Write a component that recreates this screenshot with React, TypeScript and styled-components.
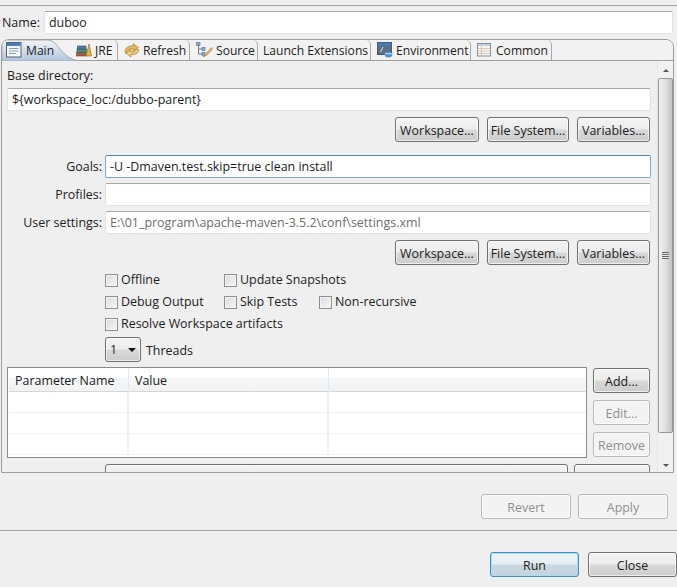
import React from 'react';
import styled, { createGlobalStyle } from 'styled-components';

const GlobalStyle = createGlobalStyle`
  html, body {
    margin: 0;
    padding: 0;
    background: #efefef;
    overflow: hidden;
  }
  * { box-sizing: border-box; }
`;

const Page = styled.div`
  width: 677px;
  height: 587px;
  overflow: hidden;
  padding-top: 5px;
  background: #efefef;
  color: #1c1c1c;
  font-family: 'Open Sans', 'Noto Sans', sans-serif;
  font-size: 12.45px;
`;
const TopRule = styled.div`
  height: 1px;
  background: #a0a0a0;
`;
const NameRow = styled.div`
  display: flex;
  align-items: center;
  height: 23px;
  margin: 5px 4px 0 2px;
`;
const NameLabel = styled.div`
  flex: none;
  width: 42px;
`;
const Field = styled.div<{ $active?: boolean; $muted?: boolean }>`
  flex: 1;
  height: 23px;
  padding: 0 4px;
  line-height: 22px;
  white-space: nowrap;
  background: #fff;
  border: 1px solid ${p => (p.$active ? '#7ba6cf' : '#e2e2e2')};
  border-top-color: ${p => (p.$active ? '#4f86b8' : '#a8a8a8')};
  border-radius: 2px;
  color: ${p => (p.$muted ? '#6d6d6d' : '#1c1c1c')};
`;
const Folder = styled.div`
  height: 434px;
  margin: 5px 3px 0 1px;
  border: 1px solid #9c9c9c;
  border-radius: 8px 8px 0 0;
  overflow: hidden;
  background: #efefef;
`;
const TabStrip = styled.div`
  display: flex;
  height: 21px;
  border-bottom: 1px solid #9c9c9c;
  background: #f2f2f2;
  font-size: 12.1px;
`;
const Tab = styled.div<{ $width: number; $pad?: number }>`
  position: relative;
  display: flex;
  align-items: center;
  flex: none;
  width: ${p => p.$width}px;
  height: 20px;
  padding-left: ${p => p.$pad ?? 6}px;
  gap: 3px;
  white-space: nowrap;
  border-right: 1px solid #a9a9a9;
  border-top-right-radius: 5px;
`;
const MainTab = styled(Tab)`
  border-right: none;
  z-index: 1;
  gap: 4px;
`;
const MainShape = styled.svg`
  position: absolute;
  left: 0;
  top: 0;
  z-index: -1;
`;
const FolderBody = styled.div`
  display: flex;
  height: 412px;
`;
const FormArea = styled.div`
  flex: 1;
  min-width: 0;
  height: 412px;
  overflow: hidden;
  padding: 5px 5px 0 5px;
`;
const Label = styled.div`
  height: 17px;
  line-height: 19px;
`;
const WideField = styled(Field)`
  flex: none;
  width: 644px;
  margin-top: 5px;
`;
const ButtonRow = styled.div<{ $top: number }>`
  display: flex;
  justify-content: flex-end;
  gap: 8px;
  width: 643px;
  margin-top: ${p => p.$top}px;
`;
const PushButton = styled.div<{ $width: number; $disabled?: boolean; $focus?: boolean }>`
  display: flex;
  align-items: center;
  justify-content: center;
  flex: none;
  width: ${p => p.$width}px;
  height: 25px;
  padding-top: 1px;
  border: 1px solid ${p => (p.$disabled ? '#b9b9b9' : p.$focus ? '#3d8fc4' : '#707070')};
  border-radius: 3px;
  color: ${p => (p.$disabled ? '#8f8f8f' : '#1c1c1c')};
  background: ${p =>
    p.$disabled
      ? '#f3f3f3'
      : p.$focus
        ? 'linear-gradient(#edf3f7 0%, #e6eef3 48%, #c9d7e0 52%, #c4d3dc 100%)'
        : 'linear-gradient(#f4f4f4 0%, #ececec 48%, #d8d8d8 52%, #cdcdcd 100%)'};
  box-shadow: inset 0 0 0 1px ${p => (p.$focus ? '#a9dcf3' : 'rgba(255,255,255,.65)')};
`;
const FormRow = styled.div<{ $top: number }>`
  display: flex;
  align-items: center;
  gap: 3px;
  width: 644px;
  height: 23px;
  margin-top: ${p => p.$top}px;
`;
const RowLabel = styled.div`
  flex: none;
  width: 95px;
  text-align: right;
  white-space: nowrap;
`;
const CheckGrid = styled.div`
  display: grid;
  grid-template-columns: 119px 95px auto;
  grid-auto-rows: 22px;
  margin: 3px 0 0 98px;
`;
const CheckItem = styled.div`
  display: flex;
  align-items: center;
  gap: 3px;
  white-space: nowrap;
`;
const WideCheck = styled(CheckItem)`
  grid-column: 1 / -1;
`;
const Box = styled.span`
  flex: none;
  width: 13px;
  height: 13px;
  margin-top: 2px;
  border: 1px solid #8e8f8f;
  background: linear-gradient(135deg, #dcdcdc, #f5f5f5);
  box-shadow: inset 0 0 0 1px #f4f4f4;
`;
const ThreadsRow = styled.div`
  display: flex;
  align-items: center;
  gap: 5px;
  height: 25px;
  margin: 3px 0 0 98px;
`;
const ThreadsLabel = styled.span`
  margin-top: 2px;
`;
const Combo = styled(PushButton)`
  justify-content: space-between;
  padding: 0 4px;
`;
const ComboArrow = styled.span`
  width: 0;
  height: 0;
  border-left: 4px solid transparent;
  border-right: 4px solid transparent;
  border-top: 4px solid #111;
`;
const TableRow = styled.div`
  display: flex;
  gap: 6px;
  margin-top: 5px;
  height: 91px;
`;
const Table = styled.div`
  flex: none;
  width: 580px;
  height: 91px;
  background: #fff;
  border: 1px solid #8a8a8a;
  padding-left: 1px;
`;
const HeaderRow = styled.div`
  display: grid;
  grid-template-columns: 120px 200px 1fr;
  height: 24px;
  background: linear-gradient(#fff 0%, #fff 40%, #f5f6f7 45%, #f1f2f3 100%);
  border-bottom: 1px solid #d6d6d6;
`;
const HeaderCell = styled.div`
  padding-left: 6px;
  line-height: 25px;
  border-right: 1px solid #e3e8ee;
`;
const BodyRow = styled.div`
  display: grid;
  grid-template-columns: 120px 200px 1fr;
  height: 21px;
  border-bottom: 1px solid #f0f0f0;
`;
const BodyCell = styled.div`
  border-right: 2px solid #edf2fa;
`;
const SideButtons = styled.div`
  display: flex;
  flex-direction: column;
  gap: 7px;
  padding-top: 1px;
`;
const RuntimeRow = styled.div`
  display: flex;
  align-items: flex-start;
  width: 643px;
  height: 25px;
  margin-top: 6px;
  gap: 6px;
  padding-left: 98px;
`;
const ScrollBar = styled.div`
  flex: none;
  display: flex;
  flex-direction: column;
  align-items: center;
  width: 16px;
  height: 412px;
  background: #f1f1f1;
  border-left: 1px solid #e6e6e6;
`;
const ScrollArrow = styled.span<{ $down?: boolean }>`
  flex: none;
  width: 0;
  height: 0;
  margin: 8px 0 6px;
  border-left: 3px solid transparent;
  border-right: 3px solid transparent;
  ${p => (p.$down ? 'border-top: 3px solid #555;' : 'border-bottom: 3px solid #555;')}
`;
const ScrollThumb = styled.div`
  display: flex;
  align-items: center;
  justify-content: center;
  flex: none;
  width: 15px;
  height: 355px;
  border: 1px solid #979797;
  border-radius: 2px;
  background: linear-gradient(90deg, #f2f2f2, #dfdfdf 50%, #c4c4c4);
`;
const Grip = styled.span`
  width: 7px;
  height: 7px;
  background: repeating-linear-gradient(#666 0 1px, #e8e8e8 1px 2px);
`;
const ScrollGap = styled.div`
  flex: 1;
`;
const ApplyRow = styled.div`
  display: flex;
  justify-content: flex-end;
  gap: 7px;
  margin: 21px 9px 0 0;
`;
const Rule = styled.div`
  height: 1px;
  margin-top: 11px;
  background: #a0a0a0;
`;
const DialogRow = styled.div`
  display: flex;
  gap: 9px;
  margin: 21px 0 0 490px;
`;

const MainIcon = () => (
  <svg width="16" height="16" viewBox="0 0 16 16">
    <rect x="0.5" y="0.5" width="14.5" height="14.5" fill="#f7f9fb" stroke="#54606e" />
    <rect x="1" y="1" width="13.5" height="3" fill="#4a7fb5" />
    <path d="M3 6.5h9.5M3 9h9.5M3 11.5h7" stroke="#7e9fc0" />
  </svg>
);
const JreIcon = () => (
  <svg width="16" height="14" viewBox="0 0 16 14">
    <rect x="0.5" y="9.5" width="10" height="3.5" fill="#a85b36" stroke="#6d4a33" strokeWidth=".6" />
    <rect x="1" y="6" width="9.5" height="3.5" fill="#4c8d7a" stroke="#2e5a50" strokeWidth=".6" />
    <rect x="1.5" y="3" width="8.5" height="3" fill="#5177a8" stroke="#32506f" strokeWidth=".6" />
    <path d="M10 13 13 1l2.5 12z" fill="#e8b33c" stroke="#8a6a20" strokeWidth=".6" />
  </svg>
);
const RefreshIcon = () => (
  <svg width="16" height="16" viewBox="0 0 16 16">
    <path d="M1 9C2 5 5 3.5 9 4V1.8L14.5 5.5 9 9V6.6C6.5 6.4 4.5 7 3.5 10L2 12Z" fill="#e8b85c" stroke="#a87b2c" strokeWidth=".7" />
    <path d="M15 8C14 11.5 11 13 7 12.5V15L1.8 11 7 7.5V10C9.5 10.2 11 9.5 12.5 7Z" fill="#f1cd84" stroke="#a87b2c" strokeWidth=".7" />
  </svg>
);
const SourceIcon = () => (
  <svg width="17" height="16" viewBox="0 0 17 16">
    <path d="M2.5 3v9h4M2.5 7h4" fill="none" stroke="#6a7f9a" />
    <rect x="0.5" y="0.5" width="3.5" height="3" fill="#8eaed0" stroke="#55708f" strokeWidth=".6" />
    <rect x="6" y="5.5" width="3" height="3" fill="#8eaed0" stroke="#55708f" strokeWidth=".6" />
    <rect x="6" y="10.5" width="3" height="3" fill="#8eaed0" stroke="#55708f" strokeWidth=".6" />
    <path d="M15.5 5.5 9.5 12l-2.5 3 3.5-1.5 6-6.5z" fill="#e9b765" stroke="#a5772e" strokeWidth=".6" />
  </svg>
);
const EnvIcon = () => (
  <svg width="16" height="16" viewBox="0 0 16 16">
    <rect x="0.5" y="0.5" width="14" height="12" fill="#5d6f86" stroke="#4a5a70" />
    <rect x="1" y="1" width="13" height="2.5" fill="#3f7fc2" />
    <path d="M3 10 5.5 5h1L4 10z" fill="#dfe7ef" />
    <ellipse cx="11.5" cy="12.5" rx="3.8" ry="3" fill="#4b8fd0" />
    <rect x="7.8" y="11" width="7.6" height="1.3" fill="#a9cdef" />
  </svg>
);
const CommonIcon = () => (
  <svg width="16" height="14" viewBox="0 0 16 14">
    <rect x="0.5" y="0.5" width="13" height="12.5" fill="#f8f6ee" stroke="#7f8fa8" />
    <rect x="1" y="1" width="12" height="2" fill="#c6d2e3" />
    <path d="M4.5 3v10M1 5.5h12M1 8h12M1 10.5h12" stroke="#c9b8a0" strokeWidth=".7" />
  </svg>
);

const browse = ['Workspace...', 'File System...', 'Variables...'];
const widths = [84, 82, 73];

const BrowseButtons = ({ top }: { top: number }) => (
  <ButtonRow $top={top}>
    {browse.map((text, i) => (
      <PushButton key={text} $width={widths[i]}>
        {text}
      </PushButton>
    ))}
  </ButtonRow>
);

const Check = ({ text }: { text: string }) => (
  <CheckItem>
    <Box />
    {text}
  </CheckItem>
);

const App = () => (
  <Page>
    <GlobalStyle />
    <TopRule />
    <NameRow>
      <NameLabel>Name:</NameLabel>
      <Field>duboo</Field>
    </NameRow>
    <Folder>
      <TabStrip>
        <MainTab $width={74} $pad={4}>
          <MainShape width="80" height="21" viewBox="0 0 80 21">
            <defs>
              <linearGradient id="mainFill" x1="0" y1="0" x2="0" y2="1">
                <stop offset="0" stopColor="#f4f5f6" />
                <stop offset="1" stopColor="#aec5df" />
              </linearGradient>
            </defs>
            <path
              d="M0 21V5Q0 0 5 0H46C56 0 60 20 78 21Z"
              fill="url(#mainFill)"
              stroke="#a9a9a9"
            />
          </MainShape>
          <MainIcon />
          Main
        </MainTab>
        <Tab $width={42} $pad={0}>
          <JreIcon />
          JRE
        </Tab>
        <Tab $width={72}>
          <RefreshIcon />
          Refresh
        </Tab>
        <Tab $width={68}>
          <SourceIcon />
          Source
        </Tab>
        <Tab $width={113} $pad={5}>
          Launch Extensions
        </Tab>
        <Tab $width={100}>
          <EnvIcon />
          Environment
        </Tab>
        <Tab $width={81}>
          <CommonIcon />
          Common
        </Tab>
      </TabStrip>
      <FolderBody>
        <FormArea>
          <Label>Base directory:</Label>
          <WideField>{'${workspace_loc:/dubbo-parent}'}</WideField>
          <BrowseButtons top={6} />
          <FormRow $top={13}>
            <RowLabel>Goals:</RowLabel>
            <Field $active>-U -Dmaven.test.skip=true clean install</Field>
          </FormRow>
          <FormRow $top={5}>
            <RowLabel>Profiles:</RowLabel>
            <Field />
          </FormRow>
          <FormRow $top={5}>
            <RowLabel>User settings:</RowLabel>
            <Field $muted>E:\01_program\apache-maven-3.5.2\conf\settings.xml</Field>
          </FormRow>
          <BrowseButtons top={6} />
          <CheckGrid>
            <Check text="Offline" />
            <Check text="Update Snapshots" />
            <span />
            <Check text="Debug Output" />
            <Check text="Skip Tests" />
            <Check text="Non-recursive" />
            <WideCheck>
              <Box />
              Resolve Workspace artifacts
            </WideCheck>
          </CheckGrid>
          <ThreadsRow>
            <Combo $width={36}>
              1
              <ComboArrow />
            </Combo>
            <ThreadsLabel>Threads</ThreadsLabel>
          </ThreadsRow>
          <TableRow>
            <Table>
              <HeaderRow>
                <HeaderCell>Parameter Name</HeaderCell>
                <HeaderCell>Value</HeaderCell>
                <span />
              </HeaderRow>
              {[0, 1, 2].map(row => (
                <BodyRow key={row}>
                  <BodyCell />
                  <BodyCell />
                  <span />
                </BodyRow>
              ))}
            </Table>
            <SideButtons>
              <PushButton $width={57}>Add...</PushButton>
              <PushButton $width={57} $disabled>
                Edit...
              </PushButton>
              <PushButton $width={57} $disabled>
                Remove
              </PushButton>
            </SideButtons>
          </TableRow>
          <RuntimeRow>
            <PushButton $width={463} />
            <PushButton $width={76} />
          </RuntimeRow>
        </FormArea>
        <ScrollBar>
          <ScrollArrow />
          <ScrollThumb>
            <Grip />
          </ScrollThumb>
          <ScrollGap />
          <ScrollArrow $down />
        </ScrollBar>
      </FolderBody>
    </Folder>
    <ApplyRow>
      <PushButton $width={90} $disabled>
        Revert
      </PushButton>
      <PushButton $width={90} $disabled>
        Apply
      </PushButton>
    </ApplyRow>
    <Rule />
    <DialogRow>
      <PushButton $width={89} $focus>
        Run
      </PushButton>
      <PushButton $width={89}>Close</PushButton>
    </DialogRow>
  </Page>
);

export default App;
